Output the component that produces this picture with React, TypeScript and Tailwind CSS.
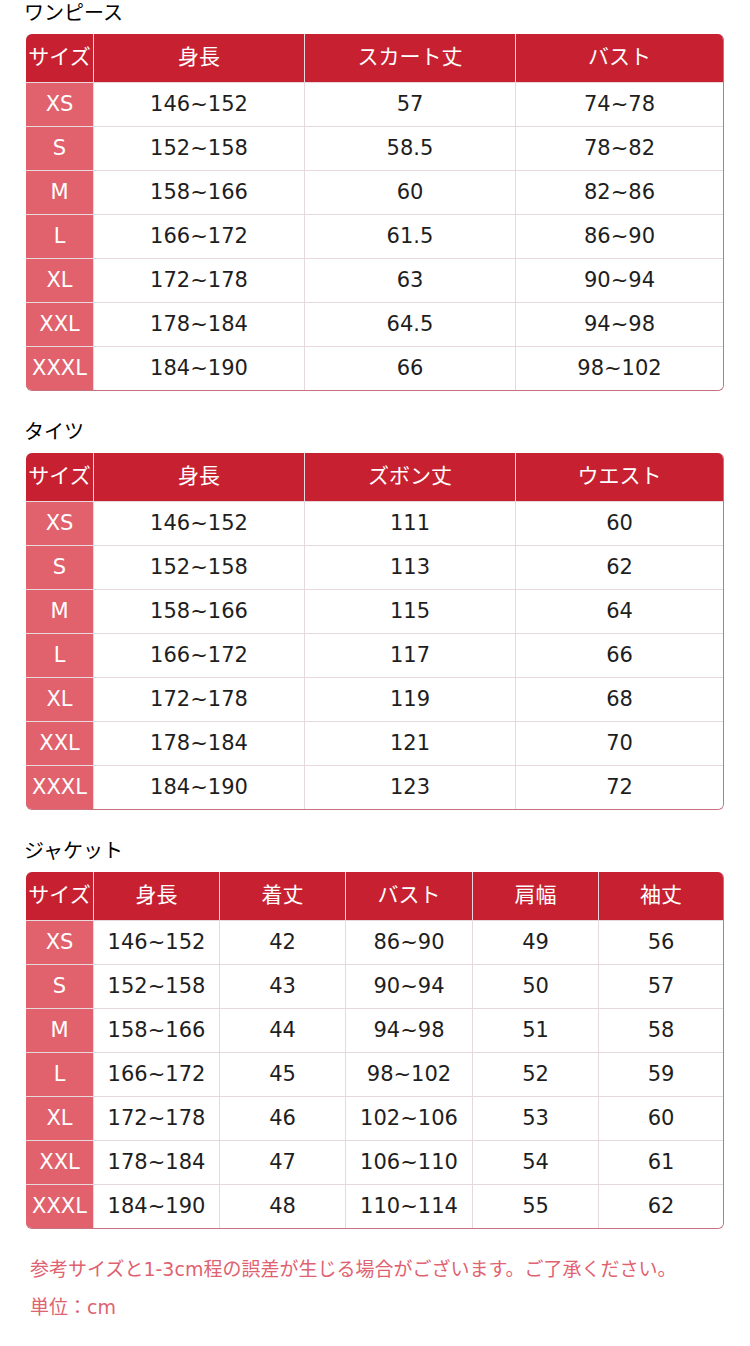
import React from "react";

type Section = {
  title: string;
  cols: string;
  headers: string[];
  rows: string[][];
};

const sizes = ["XS", "S", "M", "L", "XL", "XXL", "XXXL"];
const heights = ["146~152", "152~158", "158~166", "166~172", "172~178", "178~184", "184~190"];

const sections: Section[] = [
  {
    title: "ワンピース",
    cols: "grid-cols-[67px_210px_210px_1fr]",
    headers: ["サイズ", "身長", "スカート丈", "バスト"],
    rows: [
      ["57", "74~78"],
      ["58.5", "78~82"],
      ["60", "82~86"],
      ["61.5", "86~90"],
      ["63", "90~94"],
      ["64.5", "94~98"],
      ["66", "98~102"],
    ],
  },
  {
    title: "タイツ",
    cols: "grid-cols-[67px_210px_210px_1fr]",
    headers: ["サイズ", "身長", "ズボン丈", "ウエスト"],
    rows: [
      ["111", "60"],
      ["113", "62"],
      ["115", "64"],
      ["117", "66"],
      ["119", "68"],
      ["121", "70"],
      ["123", "72"],
    ],
  },
  {
    title: "ジャケット",
    cols: "grid-cols-[67px_125px_125px_126px_125px_1fr]",
    headers: ["サイズ", "身長", "着丈", "バスト", "肩幅", "袖丈"],
    rows: [
      ["42", "86~90", "49", "56"],
      ["43", "90~94", "50", "57"],
      ["44", "94~98", "51", "58"],
      ["45", "98~102", "52", "59"],
      ["46", "102~106", "53", "60"],
      ["47", "106~110", "54", "61"],
      ["48", "110~114", "55", "62"],
    ],
  },
];

function SizeTable({ s }: { s: Section }) {
  return (
    <div className="w-[698px] ml-[26px] overflow-hidden rounded-[6px] border-r border-b border-[#c8717f] bg-[#e6d8dc]">
      <div className={`grid ${s.cols} gap-px`}>
        {s.headers.map((h) => (
          <div key={h} className="h-[48px] bg-[#c72131] text-white text-[21px] flex items-center justify-center">
            {h}
          </div>
        ))}
        {sizes.map((size, i) => (
          <React.Fragment key={size}>
            <div className="h-[43px] bg-[#e1616c] text-white flex items-center justify-center">{size}</div>
            <div className="h-[43px] bg-white text-[#1e1e1e] flex items-center justify-center">{heights[i]}</div>
            {s.rows[i].map((v, j) => (
              <div key={j} className="h-[43px] bg-white text-[#1e1e1e] flex items-center justify-center">
                {v}
              </div>
            ))}
          </React.Fragment>
        ))}
      </div>
    </div>
  );
}

export default function App() {
  return (
    <div className="w-[750px] h-[1346px] bg-white overflow-hidden font-['DejaVu_Sans','Noto_Sans_CJK_JP',sans-serif] text-[21px]">
      {sections.map((s, idx) => (
        <div key={s.title} className={idx === 0 ? "" : "mt-[28px]"}>
          <div className="h-[34px] pl-[24px] leading-[24px] text-[20px] text-black font-['Noto_Sans_CJK_JP',sans-serif]">
            {s.title}
          </div>
          <SizeTable s={s} />
        </div>
      ))}
      <div className="mt-[21px] pl-[30px] text-[#df6270] leading-[38px] text-[19px]">
        <p>参考サイズと1-3cm程の誤差が生じる場合がございます。ご了承ください。</p>
        <p>単位：cm</p>
      </div>
    </div>
  );
}
